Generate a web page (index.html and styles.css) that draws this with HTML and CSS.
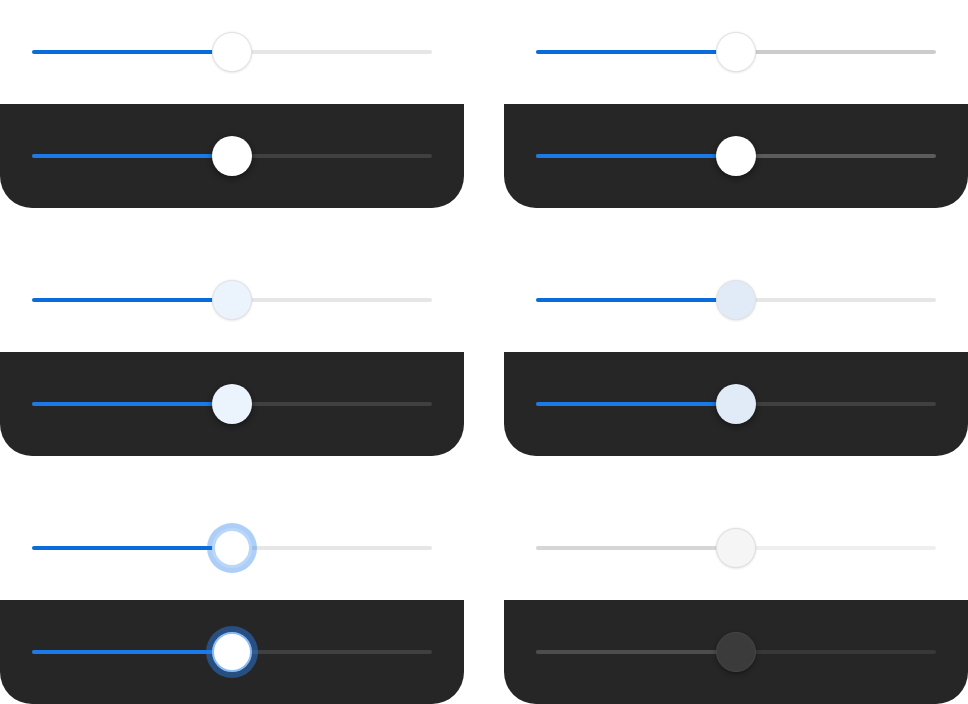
FILE: index.html
```html
<!DOCTYPE html>
<html>
<head>
<meta charset="utf-8">
<link rel="stylesheet" href="styles.css">
</head>
<body>
<div class="grid">
  <div class="card">
    <div class="pane light"><div class="slider"><div class="track"><div class="fill"></div><div class="thumb"></div></div></div></div>
    <div class="pane dark"><div class="slider"><div class="track"><div class="fill"></div><div class="thumb"></div></div></div></div>
  </div>
  <div class="card alt">
    <div class="pane light"><div class="slider"><div class="track"><div class="fill"></div><div class="thumb"></div></div></div></div>
    <div class="pane dark"><div class="slider"><div class="track"><div class="fill"></div><div class="thumb"></div></div></div></div>
  </div>
  <div class="card hover">
    <div class="pane light"><div class="slider"><div class="track"><div class="fill"></div><div class="thumb"></div></div></div></div>
    <div class="pane dark"><div class="slider"><div class="track"><div class="fill"></div><div class="thumb"></div></div></div></div>
  </div>
  <div class="card pressed">
    <div class="pane light"><div class="slider"><div class="track"><div class="fill"></div><div class="thumb"></div></div></div></div>
    <div class="pane dark"><div class="slider"><div class="track"><div class="fill"></div><div class="thumb"></div></div></div></div>
  </div>
  <div class="card focus">
    <div class="pane light"><div class="slider"><div class="track"><div class="fill"></div><div class="thumb"></div></div></div></div>
    <div class="pane dark"><div class="slider"><div class="track"><div class="fill"></div><div class="thumb"></div></div></div></div>
  </div>
  <div class="card disabled">
    <div class="pane light"><div class="slider"><div class="track"><div class="fill"></div><div class="thumb"></div></div></div></div>
    <div class="pane dark"><div class="slider"><div class="track"><div class="fill"></div><div class="thumb"></div></div></div></div>
  </div>
</div>
</body>
</html>
```

FILE: styles.css
```css
html, body {
  margin: 0;
  padding: 0;
  background: #ffffff;
  font-family: "Liberation Sans", Arial, sans-serif;
}

.grid {
  display: grid;
  grid-template-columns: 464px 464px;
  column-gap: 40px;
  row-gap: 40px;
}

.card {
  display: flex;
  flex-direction: column;
}

.pane {
  height: 104px;
  display: flex;
  align-items: center;
  padding: 0 32px;
}

.light {
  background: #ffffff;
}

.dark {
  background: #262626;
  border-radius: 0 0 32px 32px;
}

.slider {
  flex: 1;
}

.track {
  position: relative;
  height: 4px;
  border-radius: 2px;
  background: #e6e6e6;
}

.dark .track {
  background: #404040;
}

.fill {
  width: 50%;
  height: 100%;
  border-radius: 2px;
  background: #0a6bdb;
}

.dark .fill {
  background: #1b7ae8;
}

.thumb {
  position: absolute;
  left: 50%;
  top: 50%;
  width: 40px;
  height: 40px;
  margin: -20px 0 0 -20px;
  box-sizing: border-box;
  border-radius: 50%;
  background: #ffffff;
  border: 1px solid #e3e3e3;
  box-shadow: 0 0 2px rgba(0, 0, 0, 0.1), 0 1px 3px rgba(0, 0, 0, 0.06);
}

.dark .thumb {
  border: none;
  box-shadow: 0 2px 6px rgba(0, 0, 0, 0.45);
}

/* alt (second) */
.alt .light .track {
  background: #cccccc;
}
.alt .dark .track {
  background: #5c5c5c;
}

/* hover */
.hover .light .thumb {
  background: #ebf3fd;
}
.hover .dark .thumb {
  background: #ebf3fd;
}

/* pressed */
.pressed .light .thumb {
  background: #e1ebf7;
}
.pressed .dark .thumb {
  background: #e1ebf7;
}

/* focus */
.focus .thumb {
  border: 3px solid #b9d7f9;
  box-shadow: 0 0 0 5px rgba(20, 115, 230, 0.35);
}
.focus .dark .thumb {
  border: 2px solid #8cbcf5;
  box-shadow: 0 0 0 6px rgba(40, 120, 220, 0.5);
}

/* disabled */
.disabled .light .track {
  background: #efefef;
}
.disabled .light .fill {
  background: #d6d6d6;
}
.disabled .light .thumb {
  background: #f5f5f5;
  border: 1px solid #e0e0e0;
}
.disabled .dark .track {
  background: #383838;
}
.disabled .dark .fill {
  background: #4d4d4d;
}
.disabled .dark .thumb {
  background: #3b3b3b;
  border: 1px solid #474747;
  box-shadow: 0 2px 5px rgba(0, 0, 0, 0.35);
}
```
